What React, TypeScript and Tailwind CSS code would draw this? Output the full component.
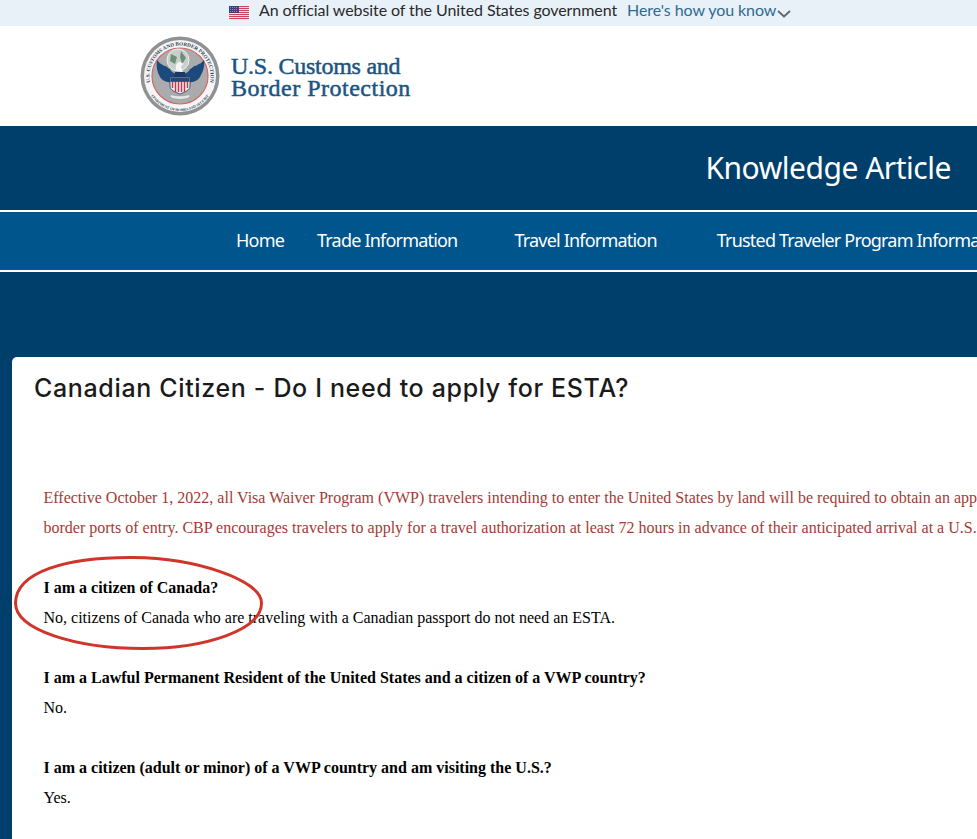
function Flag() {
  return (
    <svg width="20" height="14" viewBox="0 0 20 14" className="mt-[5px] shrink-0">
      <rect width="20" height="14" fill="#f4f1f2" />
      {[0, 2, 4, 6, 8, 10, 12].map((y) => (
        <rect key={y} y={y} width="20" height="1.1" fill="#c9455a" />
      ))}
      <rect width="10" height="7" fill="#3d3f7a" />
      {[1.5, 3.5, 5.5].map((y) =>
        [1.5, 3.5, 5.5, 7.5].map((x) => <circle key={`${x}-${y}`} cx={x} cy={y} r="0.45" fill="#dfe0ee" />)
      )}
    </svg>
  );
}

function Seal() {
  return (
    <svg width="80" height="80" viewBox="0 0 80 80" className="shrink-0">
      <defs>
        <path id="sealTop" d="M 15 57.5 A 30.5 30.5 0 1 1 65 57.5" />
        <path id="sealBottom" d="M 11.3 60 A 35 35 0 0 0 68.7 60" />
      </defs>
      <circle cx="40" cy="40" r="39.5" fill="#8f9193" />
      <circle cx="40" cy="40" r="36" fill="#f5f5f5" />
      <circle cx="40" cy="40" r="28" fill="#a9abad" stroke="#cf6a6a" strokeWidth="1.2" />
      <text fontFamily="'Liberation Serif', serif" fontSize="5.2" fontWeight="700" fill="#2f3f55">
        <textPath href="#sealTop" startOffset="50%" textAnchor="middle">U.S. CUSTOMS AND BORDER PROTECTION</textPath>
      </text>
      <text fontFamily="'Liberation Serif', serif" fontSize="3.6" fontWeight="700" fill="#2f3f55">
        <textPath href="#sealBottom" startOffset="50%" textAnchor="middle">DEPARTMENT OF HOMELAND SECURITY</textPath>
      </text>
      {/* globe */}
      <circle cx="38" cy="24" r="11" fill="#c9cfca" stroke="#eef0ee" strokeWidth="1" />
      <path d="M31 18 L37 21 L35 28 L30 25 Z M41 15 L46 22 L42 28 L40 21 Z" fill="#6c8f78" />
      {/* wings */}
      <path d="M36 44 C30 48 23 46 20 41 C17 36 16 30 17 24 C20 28 22 28 24 30 C26 29 28 33 30 33 C31 36 34 37 36 38 Z" fill="#1d4a7c" />
      <path d="M44 44 C50 48 57 46 60 41 C63 36 65 30 64 24 C61 28 58 28 56 30 C54 29 52 33 50 33 C49 36 46 37 44 38 Z" fill="#1d4a7c" />
      {/* head and body */}
      <path d="M36 34 C35 29 37 26 40 26 L44 28 L41 30 L43 37 Z" fill="#f6f6f6" />
      <path d="M35 36 L45 36 L46 42 L34 42 Z" fill="#173a66" />
      {/* shield */}
      <path d="M30 41 H50 V50 C50 54 45 56 40 58 C35 56 30 54 30 50 Z" fill="#f5f1f1" stroke="#1d3d6b" strokeWidth="0.8" />
      <rect x="30.4" y="41.4" width="19.2" height="4.5" fill="#27477a" />
      {[32.5, 35.5, 38.5, 41.5, 44.5, 47.5].map((x) => (
        <path key={x} d={`M${x} 46 V${x < 34 || x > 46 ? 52 : 56}`} stroke="#c23c47" strokeWidth="1.5" />
      ))}
      <path d="M30 61 C36 64 44 64 50 61 L49 58.5 C44 60.5 36 60.5 31 58.5 Z" fill="#e8e8e8" stroke="#8a8a8a" strokeWidth="0.4" />
    </svg>
  );
}

const paragraphs = [
  { q: 'I am a citizen of Canada?', a: 'No, citizens of Canada who are traveling with a Canadian passport do not need an ESTA.' },
  { q: 'I am a Lawful Permanent Resident of the United States and a citizen of a VWP country?', a: 'No.' },
  { q: 'I am a citizen (adult or minor) of a VWP country and am visiting the U.S.?', a: 'Yes.' },
];

export default function App() {
  return (
    <div className="relative h-[839px] w-[977px] overflow-hidden bg-[#003f6b]">
      <div className="flex h-[26px] items-center bg-[#e8f1f8] pb-[6px] pl-[229px] font-['Lato',sans-serif] text-[16px] tracking-[-0.08px] whitespace-nowrap">
        <Flag />
        <span className="ml-[10px] text-[#2a2a2a]">An official website of the United States government</span>
        <span className="ml-[10px] text-[#2f6a8f]">Here's how you know</span>
        <svg width="14" height="8" viewBox="0 0 14 8" className="mt-[7px] ml-[1px]">
          <path d="M1 1 L7 6.5 L13 1" fill="none" stroke="#5c6670" strokeWidth="1.8" />
        </svg>
      </div>

      <header className="flex h-[100px] items-center bg-white pl-[140px]">
        <Seal />
        <div className="mt-[2px] ml-[11px] font-['Liberation_Serif',serif] text-[24px] leading-[22px] text-[#1c5480] [-webkit-text-stroke:0.5px_#1c5480] whitespace-nowrap">
          <div className="tracking-[-0.25px]">U.S. Customs and</div>
          <div className="tracking-[0.5px]">Border Protection</div>
        </div>
      </header>

      <div className="flex h-[84px] items-center justify-end pr-[26px] pb-[2px] font-['Noto_Sans',sans-serif] text-[30px] text-white">
        <span className="tracking-[-0.48px]">Knowledge Article</span>
      </div>

      <nav className="flex h-[62px] items-center border-y-2 border-white bg-[#00558c] pb-[1px] pl-[236px] font-['Noto_Sans',sans-serif] text-[18px] tracking-[-0.8px] text-white whitespace-nowrap">
        <span>Home</span>
        <span className="ml-[33px]">Trade Information</span>
        <span className="ml-[57px]">Travel Information</span>
        <span className="ml-[60px]">Trusted Traveler Program Information</span>
      </nav>

      <main className="mt-[85px] ml-[12px] h-[600px] w-[1100px] rounded-tl-[5px] bg-white pl-[22px]">
        <h1 className="pt-[15px] font-['Inter',sans-serif] text-[25px] leading-[32px] font-medium tracking-[0.65px] text-[#1a1a1a]">
          Canadian Citizen - Do I need to apply for ESTA?
        </h1>
        <div className="mt-[79px] pl-[9.5px] font-['Liberation_Serif',serif] text-[16px] leading-[30px] text-black whitespace-nowrap">
          <p className="text-[#a33b35]">
            Effective October 1, 2022, all Visa Waiver Program (VWP) travelers intending to enter the United States by land will be required to obtain an approved travel authorization
          </p>
          <p className="text-[#a33b35]">
            border ports of entry. CBP encourages travelers to apply for a travel authorization at least 72 hours in advance of their anticipated arrival at a U.S. land port of entry.
          </p>
          {paragraphs.map((p) => (
            <div key={p.q} className="mt-[30px]">
              <p className="font-bold">{p.q}</p>
              <p>{p.a}</p>
            </div>
          ))}
        </div>
      </main>

      {/* hand-drawn annotation over the text */}
      <svg width="280" height="110" viewBox="0 0 280 110" className="absolute top-[550px] left-[6px]">
        <path
          d="M9.5 53 C10 22 60 7 127 7.5 C190 8 255.5 30 255.5 53 C255.5 80 200 98.5 137 98.5 C70 98.5 9.5 80 9.5 53 Z"
          fill="none"
          stroke="#d0352b"
          strokeWidth="3"
        />
      </svg>
    </div>
  );
}
